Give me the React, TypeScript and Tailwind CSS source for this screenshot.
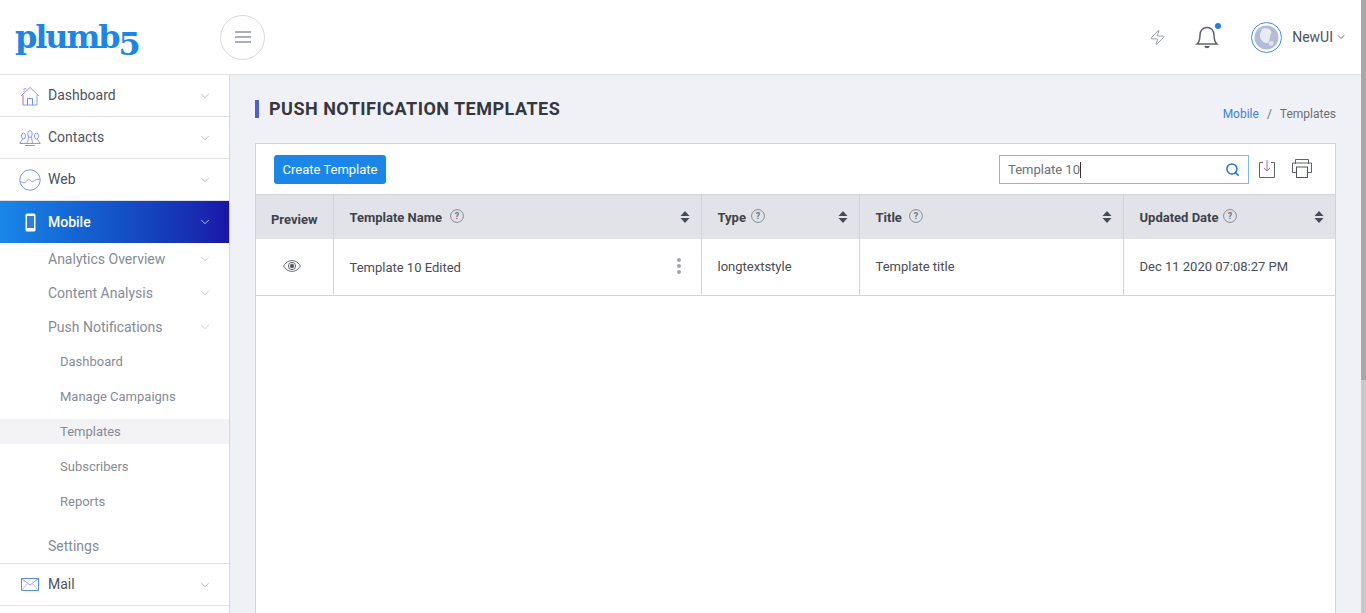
import { ChevronDown, Search, Zap } from 'lucide-react';

const font = { fontFamily: 'Roboto, sans-serif' };

function HomeIcon() {
  return (
    <svg width="20" height="20" viewBox="0 0 20 20" fill="none" strokeWidth="1">
      <path d="M1 10 L10 1.5 L19 10" stroke="#9a8cf0" />
      <path d="M3 9 V19 H17 V9" stroke="#7f9cf5" />
      <path d="M7.5 19 V12.5 H12.5 V19" stroke="#6b8ff0" />
      <path d="M4 6 V2.5 H6 V4" stroke="#e59ad8" />
      <path d="M3 10 V19" stroke="#e59ad8" />
    </svg>
  );
}

function ContactsIcon() {
  return (
    <svg width="22" height="16" viewBox="0 0 22 16" fill="none" stroke="#8d96f0" strokeWidth="1">
      <ellipse cx="4.5" cy="6" rx="2" ry="3" />
      <ellipse cx="11" cy="4" rx="2.2" ry="3.4" />
      <ellipse cx="17.5" cy="6" rx="2" ry="3" />
      <path d="M1 13 C2 11 3 10.5 3.5 9 M8 13 C9 11 9.5 9 9.5 7 M14 13 C13 11 12.5 9 12.5 7 M21 13 C20 11 19 10.5 18.5 9" />
      <path d="M0.5 13.5 H21.5 M6 15.5 H16" />
    </svg>
  );
}

function WebIcon() {
  return (
    <svg width="22" height="22" viewBox="0 0 22 22" fill="none" stroke="#7a93f2" strokeWidth="1">
      <circle cx="11" cy="11" r="10.2" />
      <path d="M1.5 12 C4 15 6 14 8 11.5 C10 9.5 11 11 12.5 12.5 C14.5 14 16 9 20.5 10.5" stroke="#9a8cf0" />
    </svg>
  );
}

function PhoneIcon() {
  return (
    <svg width="11" height="19" viewBox="0 0 11 19" fill="none">
      <rect x="0.5" y="0.5" width="10" height="18" rx="1.5" fill="#fff" />
      <rect x="2" y="3" width="7" height="12" fill="#2f7de6" />
    </svg>
  );
}

function MailIcon() {
  return (
    <svg width="18" height="13" viewBox="0 0 18 13" fill="none" strokeWidth="1">
      <rect x="0.5" y="0.5" width="17" height="12" stroke="#5a8cf0" />
      <path d="M0.5 0.5 L9 7 L17.5 0.5" stroke="#8d96f0" />
      <path d="M0.5 12.5 L6.5 5.5 M17.5 12.5 L11.5 5.5" stroke="#b5bdf5" />
    </svg>
  );
}

function NavRow({ icon, label }: { icon: React.ReactNode; label: string }) {
  return (
    <div className="flex h-[42px] items-center border-b border-[#dfe1e6] bg-white pr-[17px]">
      <div className="flex w-[48px] justify-center pl-[14px] pr-[2px]">{icon}</div>
      <span className="flex-1 text-[14px] text-[#4d5360]">{label}</span>
      <ChevronDown size={14} strokeWidth={1} className="text-[#8b8f98]" />
    </div>
  );
}

function SubRow({ label }: { label: string }) {
  return (
    <div className="flex h-[34px] items-center pl-[48px] pr-[17px]">
      <span className="flex-1 text-[14px] text-[#858b98]">{label}</span>
      <ChevronDown size={14} strokeWidth={1} className="text-[#a5a8b0]" />
    </div>
  );
}

function ChildRow({ label, active }: { label: string; active?: boolean }) {
  return (
    <div className="h-[35px] py-[5px]">
      <div className={`flex h-[25px] items-center pl-[60px] text-[13px] text-[#858b98] ${active ? 'bg-[#f3f3f5]' : ''}`}>
        {label}
      </div>
    </div>
  );
}

function HelpIcon() {
  return (
    <svg width="14" height="14" viewBox="0 0 14 14" fill="none" className="-mt-[1px] shrink-0">
      <circle cx="7" cy="7" r="6.4" stroke="#70747c" strokeWidth="0.8" />
      <text x="7" y="10.2" textAnchor="middle" fontSize="9" fill="#70747c" fontFamily="Roboto, sans-serif">?</text>
    </svg>
  );
}

function SortIcon() {
  return (
    <svg width="10" height="12" viewBox="0 0 10 12" className="shrink-0" fill="#474b55">
      <path d="M5 0 L9.5 5 H0.5 Z" />
      <path d="M5 12 L9.5 7 H0.5 Z" />
    </svg>
  );
}

function HeaderCell({ label, gap }: { label: string; gap: string }) {
  return (
    <th className="border-r border-[#d0d3da] py-0 pl-[16px] pr-[15px] text-left font-bold last:border-r-0">
      <div className="flex items-center">
        <span className="pt-[2px] text-[13px] text-[#3f424b]">{label}</span>
        <span className={`flex ${gap}`}><HelpIcon /></span>
        <span className="-mr-[4px] ml-auto flex"><SortIcon /></span>
      </div>
    </th>
  );
}

export default function App() {
  return (
    <div className="flex h-[613px] w-full overflow-hidden bg-white" style={font}>
      <div className="flex min-w-0 flex-1 flex-col">
        <header className="flex h-[75px] shrink-0 items-center border-b border-[#dfe1e6] bg-white">
          <div className="w-[220px] pl-[15px]">
            <span className="block text-[32px] font-bold leading-none tracking-[-2.1px] text-[#1a86e8]" style={{ fontFamily: '"DejaVu Serif", serif' }}>
              plumb<span className="relative top-[7px]">5</span>
            </span>
          </div>
          <button className="flex h-[45px] w-[45px] items-center justify-center rounded-full border border-[#d5d8dd] bg-white">
            <svg width="16" height="12" viewBox="0 0 16 12" fill="#a9aeb8">
              <rect width="16" height="2" />
              <rect y="5" width="16" height="2" />
              <rect y="10" width="16" height="2" />
            </svg>
          </button>
          <div className="ml-auto flex items-center pr-[14px]">
            <Zap size={17} strokeWidth={1} className="text-[#70747c]" />
            <div className="relative ml-[29px]">
              <svg width="24" height="26" viewBox="0 0 24 26" fill="none" stroke="#5f636b" strokeWidth="1.5">
                <path d="M2 20 C4.5 18 5 15 5 11 C5 6.5 8 3.5 12 3.5 C16 3.5 19 6.5 19 11 C19 15 19.5 18 22 20 Z" />
                <path d="M10 22 C10.5 24 13.5 24 14 22" fill="#5f636b" />
              </svg>
              <span className="absolute right-[-2px] top-[-1px] h-[6px] w-[6px] rounded-full bg-[#1a7de8]" />
            </div>
            <div className="ml-[32px] flex h-[31px] w-[31px] items-center justify-center rounded-full border border-[#3a8fe8]">
              <svg width="25" height="25" viewBox="0 0 25 25">
                <circle cx="12.5" cy="12.5" r="12" fill="#b4bbd6" />
                <path d="M8 4 C13 2 19 5 17 9 C15 11 17 14 14 18 C10 19 5 14 6 9 Z" fill="#e8ebf4" />
                <path d="M15 17 C18 15 21 16 19 20 C17 22 14 20 15 17 Z" fill="#dfe3ef" />
              </svg>
            </div>
            <span className="ml-[10px] text-[14px] text-[#4d5360]">NewUI</span>
            <ChevronDown size={12} strokeWidth={1.5} className="ml-[2px] text-[#3f4450]" />
          </div>
        </header>

        <div className="flex min-h-0 flex-1">
          <aside className="w-[230px] shrink-0 overflow-hidden border-r border-[#d5d7dd] bg-white">
            <NavRow icon={<HomeIcon />} label="Dashboard" />
            <NavRow icon={<ContactsIcon />} label="Contacts" />
            <NavRow icon={<WebIcon />} label="Web" />
            <div className="flex h-[42px] items-center bg-gradient-to-r from-[#1a86e8] to-[#1a14a8] pr-[17px]">
              <div className="flex w-[48px] justify-center pl-[14px] pr-[2px]"><PhoneIcon /></div>
              <span className="flex-1 text-[14px] font-medium text-white">Mobile</span>
              <ChevronDown size={14} strokeWidth={1.4} className="text-[#d7e3f8]" />
            </div>
            <div className="-mt-px">
              <SubRow label="Analytics Overview" />
              <SubRow label="Content Analysis" />
              <SubRow label="Push Notifications" />
            </div>
            <ChildRow label="Dashboard" />
            <ChildRow label="Manage Campaigns" />
            <ChildRow label="Templates" active />
            <ChildRow label="Subscribers" />
            <ChildRow label="Reports" />
            <div className="mt-[10px] flex h-[35px] items-center border-b border-[#dfe1e6] pl-[48px] text-[14px] text-[#858b98]">Settings</div>
            <NavRow icon={<MailIcon />} label="Mail" />
          </aside>

          <main className="min-w-0 flex-1 overflow-hidden bg-[#f0f1f6] px-[25px]">
            <div className="flex h-[68px] items-start">
              <h1 className="mt-[25px] border-l-[4px] border-[#4a5fd6] pl-[10px] text-[18px] font-bold leading-[18px] tracking-[0.49px] text-[#34373f]">
                PUSH NOTIFICATION TEMPLATES
              </h1>
              <div className="ml-auto mt-[32px] flex text-[12px] leading-[14px]">
                <span className="text-[#3d82dc]">Mobile</span>
                <span className="mx-[8px] text-[#6b6f78]">/</span>
                <span className="text-[#6b6f78]">Templates</span>
              </div>
            </div>

            <section className="h-[600px] border border-[#d0d3da] bg-white">
              <div className="flex h-[50px] items-start pl-[18px] pr-[23px] pt-[11px]">
                <button className="h-[29px] w-[112px] rounded-[3px] bg-[#1a86e8] text-[13px] text-white">Create Template</button>
                <div className="ml-auto flex h-[29px] w-[250px] items-center border border-[#7db8f0] pl-[8px] pr-[8px]">
                  <span className="text-[13px] text-[#6b6f78]">Template 10</span>
                  <span className="h-[16px] w-px bg-[#333]" />
                  <Search size={15} strokeWidth={2.4} className="ml-auto text-[#1a72d8]" />
                </div>
                <svg width="16" height="18" viewBox="0 0 16 18" fill="none" className="ml-[10px] mt-[5px]">
                  <path d="M4 2.5 H0.5 V17.5 H15.5 V2.5 H12" stroke="#5f636b" />
                  <path d="M8 0 V11 M5 8 L8 11 L11 8" stroke="#a46fa0" />
                </svg>
                <svg width="20" height="19" viewBox="0 0 20 19" fill="none" className="ml-[17px] mt-[4px]">
                  <path d="M3.5 5 V0.5 H16.5 V5" stroke="#5f636b" />
                  <path d="M4 13.5 H0.5 V4 H19.5 V13.5 H16" stroke="#5f636b" />
                  <rect x="4.5" y="8" width="11" height="10.5" stroke="#4d5360" fill="#fff" />
                </svg>
              </div>

              <table className="w-full table-fixed border-collapse border-t border-[#d0d3da] text-[13px]">
                <colgroup>
                  <col className="w-[77px]" />
                  <col className="w-[368px]" />
                  <col className="w-[158px]" />
                  <col className="w-[264px]" />
                  <col />
                </colgroup>
                <thead>
                  <tr className="h-[44px] bg-[#e2e3e8]">
                    <th className="border-r border-[#d0d3da] pt-[6px] text-center text-[13px] font-bold text-[#3f424b]">Preview</th>
                    <HeaderCell label="Template Name" gap="ml-[8px]" />
                    <HeaderCell label="Type" gap="ml-[5px]" />
                    <HeaderCell label="Title" gap="ml-[7px]" />
                    <HeaderCell label="Updated Date" gap="ml-[5px]" />
                  </tr>
                </thead>
                <tbody>
                  <tr className="h-[57px] border-b border-[#d0d3da] text-[#484c55]">
                    <td className="border-r border-[#d0d3da] pb-[2px] pr-[4px] text-center">
                      <svg width="18" height="12" viewBox="0 0 18 12" fill="none" stroke="#55585f" strokeWidth="0.9" className="mx-auto">
                        <path d="M0.5 6 C4 1 6.5 0.7 9 0.7 C11.5 0.7 14 1 17.5 6 C14 11 11.5 11.3 9 11.3 C6.5 11.3 4 11 0.5 6 Z" />
                        <circle cx="9" cy="6" r="3.6" />
                        <circle cx="9" cy="6" r="1.8" fill="#55585f" />
                      </svg>
                    </td>
                    <td className="border-r border-[#d0d3da] pl-[16px] pr-[20px]">
                      <div className="flex items-center justify-between pt-[2px]">
                        <span>Template 10 Edited</span>
                        <span className="-mt-[4px] flex flex-col gap-[2px]">
                          <span className="h-[4px] w-[4px] rounded-full bg-[#a3a5aa]" />
                          <span className="h-[4px] w-[4px] rounded-full bg-[#a3a5aa]" />
                          <span className="h-[4px] w-[4px] rounded-full bg-[#a3a5aa]" />
                        </span>
                      </div>
                    </td>
                    <td className="border-r border-[#d0d3da] pl-[16px] pr-[15px]">longtextstyle</td>
                    <td className="border-r border-[#d0d3da] pl-[16px] pr-[15px]">Template title</td>
                    <td className="pl-[16px] pr-[15px]">Dec 11 2020 07:08:27 PM</td>
                  </tr>
                </tbody>
              </table>
            </section>
          </main>
        </div>
      </div>
      <div className="flex w-[5px] shrink-0 flex-col">
        <div className="h-[380px] bg-[#a8a8a8]" />
        <div className="flex-1 bg-[#c8c8c8]" />
      </div>
    </div>
  );
}
